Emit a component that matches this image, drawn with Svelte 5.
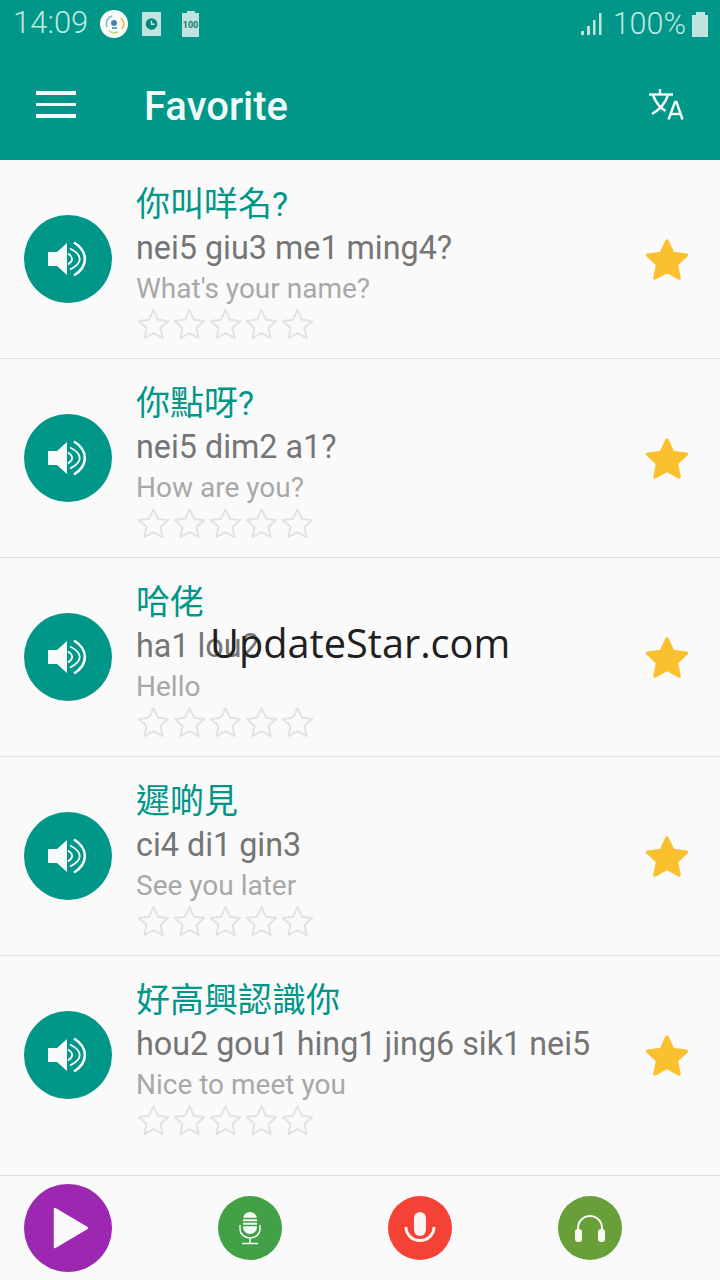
<script>
  const items = [
    { zh: '你叫咩名?', ro: 'nei5 giu3 me1 ming4?', en: "What's your name?" },
    { zh: '你點呀?', ro: 'nei5 dim2 a1?', en: 'How are you?' },
    { zh: '哈佬', ro: 'ha1 lou2', en: 'Hello' },
    { zh: '遲啲見', ro: 'ci4 di1 gin3', en: 'See you later' },
    { zh: '好高興認識你', ro: 'hou2 gou1 hing1 jing6 sik1 nei5', en: 'Nice to meet you' }
  ];
  const starPath = 'M12 1.6l3.2 6.9 7.4.9-5.5 5.1 1.5 7.4L12 18.2l-6.6 3.7 1.5-7.4L1.400 9.400l7.400-.9z';
  const favPath = 'M12 2.600l3 6.500 7.100.9-5.200 4.900 1.400 7L12 18.400l-6.300 3.500 1.400-7L1.900 10l7.100-.9z';
</script>

<div class="screen">
  <header class="top">
    <div class="status">
      <div class="status-left">
        <span class="clock">14:09</span>
        <svg class="ic-app" viewBox="0 0 28 28" width="28" height="28" aria-hidden="true">
          <circle cx="14" cy="14" r="14" fill="#f7fbfa" />
          <path d="M7 17a8 8 0 0 1 5-11" fill="none" stroke="#7fb5c9" stroke-width="1.500" />
          <path d="M21 8a8 8 0 0 1 1 11" fill="none" stroke="#e8c64d" stroke-width="2" />
          <path d="M9 21a9 9 0 0 0 9 1" fill="none" stroke="#c9d76a" stroke-width="1.500" />
          <circle cx="14" cy="13" r="3" fill="#3f86b5" />
          <path d="M12 18h5" stroke="#3f86b5" stroke-width="1.500" />
        </svg>
        <svg class="ic-clock" viewBox="0 0 19 24" width="19" height="24" aria-hidden="true">
          <rect width="19" height="24" rx="1" fill="#bfe3de" />
          <circle cx="9.500" cy="12" r="5.800" fill="#00897b" />
          <path d="M9.500 8.500v3.800h3.300" fill="none" stroke="#bfe3de" stroke-width="1.400" />
        </svg>
        <div class="mini-batt">
          <span class="mini-cap"></span>
          <span class="mini-body">100</span>
        </div>
      </div>
      <div class="status-right">
        <svg class="ic-signal" viewBox="0 0 24 24" width="24" height="24" aria-hidden="true">
          <g fill="#bfe3de">
            <rect x="1" y="19" width="3" height="4" />
            <rect x="7" y="14" width="3" height="9" />
            <rect x="13" y="8" width="2.500" height="15" />
            <rect x="19" y="1" width="2.500" height="22" />
          </g>
        </svg>
        <span class="pct">100%</span>
        <div class="batt">
          <span class="batt-cap"></span>
          <span class="batt-body"></span>
        </div>
      </div>
    </div>
    <div class="toolbar">
      <div class="burger"><span></span><span></span><span></span></div>
      <h1>Favorite</h1>
      <svg class="ic-translate" viewBox="0 0 36 32" width="36" height="32" aria-hidden="true">
        <g fill="none" stroke="#f4fbfa" stroke-width="2.400">
          <path d="M1 5.500h24" />
          <path d="M12 0v5" />
          <path d="M5 6c2.500 7 7.500 13 12.500 16" />
          <path d="M20 6c-2 6-7 14-16 19" />
          <path d="M20.500 30.500 27 13h1.500l6 17.500" />
          <path d="M23 25h10" />
        </g>
      </svg>
    </div>
  </header>

  <main class="list">
    {#each items as it}
      <article class="row">
        <div class="speaker">
          <svg viewBox="0 0 40 36" width="40" height="36" aria-hidden="true">
            <path d="M1 11h9L20 2v32L10 25H1z" fill="#f6fbfa" />
            <g fill="none" stroke="#f6fbfa" stroke-width="1.800">
              <path d="M21 12.500c5.500 3.500 5.500 7.500 0 11" />
              <path d="M23 7.500c13 6.500 13 14.500 0 21" />
            </g>
            <path d="M27 1.500c14.500 9 14.500 24 0 33" fill="none" stroke="#f6fbfa" stroke-width="2.600" />
          </svg>
        </div>
        <div class="text">
          <div class="zh">{it.zh}</div>
          <div class="ro">{it.ro}</div>
          <div class="en">{it.en}</div>
          <div class="rating">
            {#each [0, 1, 2, 3, 4] as _}
              <svg viewBox="0 0 24 24" width="33" height="33" aria-hidden="true">
                <path d={starPath} fill="none" stroke="#e2e2e2" stroke-width="1.400" stroke-linejoin="round" />
              </svg>
            {/each}
          </div>
        </div>
        <svg class="fav" viewBox="0 0 24 24" width="46" height="46" aria-hidden="true">
          <path d={favPath} fill="#fbc02d" stroke="#fbc02d" stroke-width="1.800" stroke-linejoin="round" />
        </svg>
      </article>
    {/each}
  </main>

  <footer class="bottom">
    <div class="btn play">
      <svg viewBox="0 0 36 42" width="36" height="42" aria-hidden="true">
        <path d="M2 2 34 21 2 40z" fill="#fbf8fc" stroke="#fbf8fc" stroke-width="2.500" stroke-linejoin="round" />
      </svg>
    </div>
    <div class="btn mic-green">
      <svg viewBox="0 0 24 34" width="24" height="34" aria-hidden="true">
        <rect x="5" y="1" width="14" height="22" rx="7" fill="#f5faf5" />
        <g stroke="#43a047" stroke-width="1.300">
          <path d="M5 7.500h14M5 11h14M5 14.500h14" />
        </g>
        <path d="M2 14v4a10 9 0 0 0 20 0v-4" fill="none" stroke="#f5faf5" stroke-width="1.400" />
        <path d="M12 27v5M4 32.500h16" stroke="#f5faf5" stroke-width="1.500" />
      </svg>
    </div>
    <div class="btn mic-red">
      <svg viewBox="0 0 32 34" width="32" height="34" aria-hidden="true">
        <rect x="10" y="1" width="12" height="24" rx="6" fill="#fdf3f2" />
        <path d="M2 16a14 13.500 0 0 0 28 0" fill="none" stroke="#fdf3f2" stroke-width="3" />
      </svg>
    </div>
    <div class="btn phones">
      <svg viewBox="0 0 32 30" width="32" height="30" aria-hidden="true">
        <path d="M4 19v-4a12 12 0 0 1 24 0v4" fill="none" stroke="#f7faf3" stroke-width="2" />
        <rect x="1" y="16" width="7" height="13" rx="3" fill="#f7faf3" />
        <rect x="24" y="16" width="7" height="13" rx="3" fill="#f7faf3" />
      </svg>
    </div>
  </footer>

  <div class="watermark">UpdateStar.com</div>
</div>

<style>
  :global(body) {
    margin: 0;
    background: #fafafa;
  }
  .screen {
    position: relative;
    width: 720px;
    height: 1280px;
    overflow: hidden;
    background: #fafafa;
    font-family: Roboto, "Noto Sans CJK TC", sans-serif;
    display: flex;
    flex-direction: column;
  }
  .top {
    height: 160px;
    flex: none;
    background: #009688;
    display: flex;
    flex-direction: column;
  }
  .status {
    height: 48px;
    flex: none;
    display: flex;
    justify-content: space-between;
    align-items: center;
    padding: 0 12px 0 13px;
    box-sizing: border-box;
    color: #bfe8e2;
  }
  .status-left, .status-right {
    display: flex;
    align-items: center;
  }
  .clock {
    font-size: 31px;
    font-weight: 300;
    width: 87px;
    margin-top: -3px;
  }
  .ic-clock {
    margin-left: 14px;
  }
  .mini-batt {
    margin-left: 21px;
    width: 17px;
    display: flex;
    flex-direction: column;
    align-items: center;
  }
  .mini-cap {
    width: 8px;
    height: 2px;
    background: #bfe3de;
  }
  .mini-body {
    width: 17px;
    height: 24px;
    background: #bfe3de;
    color: #17786d;
    font-size: 9px;
    font-weight: 700;
    line-height: 24px;
    text-align: center;
  }
  .pct {
    font-size: 30.500px;
    font-weight: 300;
    margin: -2px 0 0 9px;
  }
  .batt {
    margin-left: 6px;
    width: 16px;
    display: flex;
    flex-direction: column;
    align-items: center;
  }
  .batt-cap {
    width: 9px;
    height: 3px;
    background: #bfe3de;
  }
  .batt-body {
    width: 16px;
    height: 22px;
    background: #bfe3de;
  }
  .toolbar {
    flex: 1;
    display: flex;
    align-items: center;
    padding: 0 36px;
    color: #eefaf8;
    margin-top: 1px;
  }
  .burger {
    width: 40px;
    display: flex;
    flex-direction: column;
    gap: 8px;
  }
  .burger span {
    height: 3.500px;
    background: #f0faf9;
  }
  h1 {
    margin: 4px 0 0 68px;
    font-size: 40px;
    font-weight: 500;
    flex: 1;
  }
  .ic-translate {
    margin: 1px 0 0 0;
  }
  .list {
    flex: 1;
  }
  .row {
    height: 199px;
    box-sizing: border-box;
    border-bottom: 1px solid #dedede;
    display: flex;
    align-items: center;
    padding: 0 30px 0 24px;
  }
  .row:last-child {
    border-bottom-color: transparent;
  }
  .speaker {
    width: 88px;
    height: 88px;
    flex: none;
    border-radius: 50%;
    background: #009688;
    display: flex;
    align-items: center;
    justify-content: center;
  }
  .speaker svg {
    margin-left: -2px;
  }
  .text {
    flex: 1;
    margin-left: 24px;
    display: flex;
    flex-direction: column;
    margin-top: 4px;
  }
  .zh {
    font-size: 34px;
    line-height: 46px;
    color: #009688;
  }
  .ro {
    font-size: 32.300px;
    line-height: 44px;
    color: #757575;
    margin-top: -1px;
  }
  .en {
    font-size: 28px;
    line-height: 38px;
    color: #a8a8a8;
    margin-top: 0;
  }
  .rating {
    display: flex;
    gap: 3px;
    margin: 0 0 0 1px;
  }
  .rating svg {
    display: block;
  }
  .fav {
    flex: none;
  }
  .bottom {
    height: 105px;
    flex: none;
    box-sizing: border-box;
    border-top: 1px solid #dedede;
    position: relative;
    display: flex;
    align-items: center;
    padding: 0 98px 0 24px;
    justify-content: space-between;
  }
  .btn {
    width: 64px;
    height: 64px;
    border-radius: 50%;
    display: flex;
    align-items: center;
    justify-content: center;
    flex: none;
  }
  .play {
    width: 88px;
    height: 88px;
    background: #9c27b0;
  }
  .play svg {
    margin-left: 6px;
  }
  .mic-green {
    background: #43a047;
    margin-left: 42px;
  }
  .mic-red {
    background: #f44336;
    margin-left: 42px;
  }
  .phones {
    background: #689f38;
    margin-left: 42px;
  }
  .watermark {
    position: absolute;
    left: 210px;
    top: 618px;
    font-family: "Open Sans", sans-serif;
    font-size: 39.700px;
    line-height: 50px;
    color: #202020;
    white-space: nowrap;
  }
</style>
